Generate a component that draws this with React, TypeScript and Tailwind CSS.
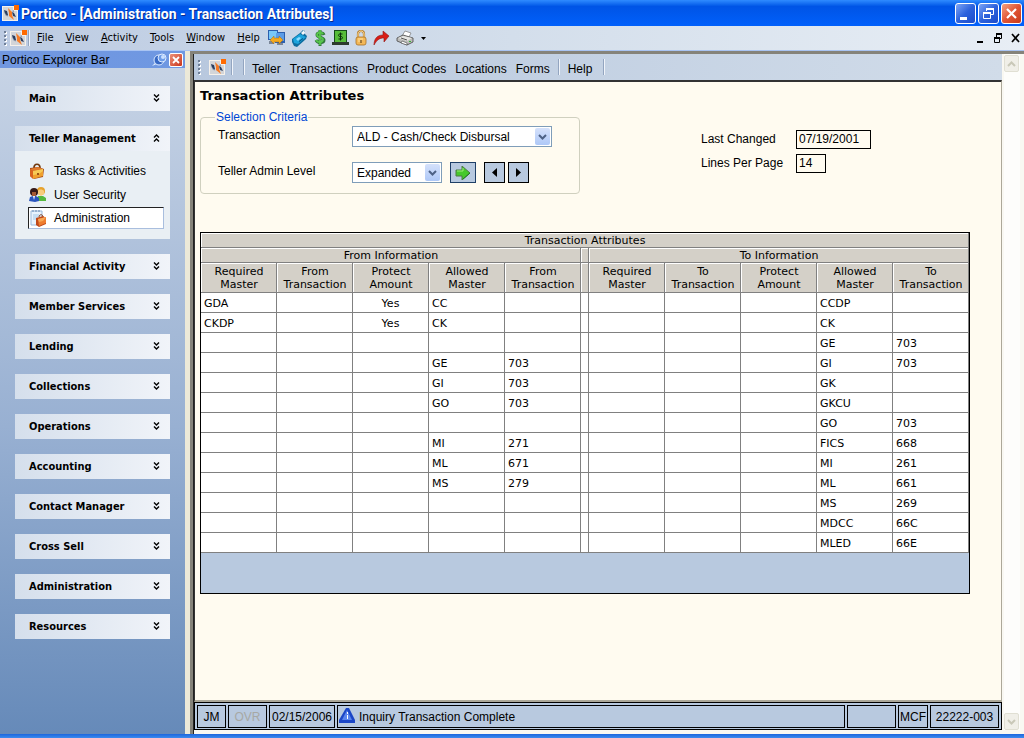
import type { ReactNode } from 'react';

const MENUS = ['File', 'View', 'Activity', 'Tools', 'Window', 'Help'];
const PAGE_LINKS = ['Teller', 'Transactions', 'Product Codes', 'Locations', 'Forms'];
const SECTIONS = [
  'Financial Activity',
  'Member Services',
  'Lending',
  'Collections',
  'Operations',
  'Accounting',
  'Contact Manager',
  'Cross Sell',
  'Administration',
  'Resources',
];

type Row = { from: string[]; to: string[] };

const ROWS: Row[] = [
  { from: ['GDA', '', 'Yes', 'CC', ''], to: ['', '', '', 'CCDP', ''] },
  { from: ['CKDP', '', 'Yes', 'CK', ''], to: ['', '', '', 'CK', ''] },
  { from: ['', '', '', '', ''], to: ['', '', '', 'GE', '703'] },
  { from: ['', '', '', 'GE', '703'], to: ['', '', '', 'GI', '703'] },
  { from: ['', '', '', 'GI', '703'], to: ['', '', '', 'GK', ''] },
  { from: ['', '', '', 'GO', '703'], to: ['', '', '', 'GKCU', ''] },
  { from: ['', '', '', '', ''], to: ['', '', '', 'GO', '703'] },
  { from: ['', '', '', 'MI', '271'], to: ['', '', '', 'FICS', '668'] },
  { from: ['', '', '', 'ML', '671'], to: ['', '', '', 'MI', '261'] },
  { from: ['', '', '', 'MS', '279'], to: ['', '', '', 'ML', '661'] },
  { from: ['', '', '', '', ''], to: ['', '', '', 'MS', '269'] },
  { from: ['', '', '', '', ''], to: ['', '', '', 'MDCC', '66C'] },
  { from: ['', '', '', '', ''], to: ['', '', '', 'MLED', '66E'] },
];

const columns = (side: string) => [
  ['Required', 'Master'],
  [side, 'Transaction'],
  ['Protect', 'Amount'],
  ['Allowed', 'Master'],
  [side, 'Transaction'],
];

function Logo() {
  return (
    <svg width="17" height="17" viewBox="0 0 17 17" className="shrink-0" aria-hidden>
      <path d="M0 1h12v4h4v11H0z" fill="#f6f1ea" />
      <path d="M1 2h10v4h4v9H1z" fill="#d3d5d8" />
      <path d="M2 5l3 1 1 4-1 1-2-2z" fill="#2a3d5e" />
      <path d="M10 7l2 1 2 4-3-1z" fill="#2a3d5e" />
      <path d="M3 8l3 4-3-2zM10 6l2-1v3z" fill="#8d9cb3" />
      <path d="M6 3l4 4v3l2 5-5-4V8z" fill="#f57a24" />
      <path d="M12 0h5v5h-5z" fill="#ff6a00" />
    </svg>
  );
}

function Grip() {
  return (
    <svg width="3" height="17" viewBox="0 0 3 17" className="shrink-0" aria-hidden>
      {[0, 4, 8, 12].map((y) => (
        <g key={y}>
          <path d={`M1 ${y + 2}h2v2H1z`} fill="#fff" />
          <path d={`M0 ${y + 1}h2v2H0z`} fill="#6f7f97" />
        </g>
      ))}
    </svg>
  );
}

function Separator() {
  return <span className="h-4 w-px shrink-0 bg-[#f0f4fa] shadow-[-1px_0_0_#93a5c0]" />;
}

function Chevrons({ up }: { up?: boolean }) {
  return (
    <svg width="7" height="8" viewBox="0 0 7 8" fill="none" stroke="#000" strokeWidth="1.4" className="mt-[6px] self-start" aria-hidden>
      <path d={up ? 'M1 3.5l2.500-2.500 2.500 2.500M1 7.500l2.500-2.500 2.500 2.500' : 'M1 .5l2.500 2.500 2.500-2.500M1 4.500l2.500 2.500 2.500-2.500'} />
    </svg>
  );
}

const ToolIcons: { label: string; icon: ReactNode }[] = [
  {
    label: 'Connections',
    icon: (
      <svg width="17" height="16" viewBox="0 0 17 16">
        <path d="M0 0h10v10H0zM7 2h10v11H7z" fill="#2c5fae" />
        <path d="M1 1h8v8H1z" fill="#79c8f8" />
        <path d="M8 3h8v8H8z" fill="#5a9ce8" />
        <path d="M1 11h5v3H1zM9 13h6v2H9z" fill="#7b8798" />
        <path d="M2 10l4-4v2h5V6l4 4-4 4v-2H6v2z" fill="#f3a91f" stroke="#98610c" strokeWidth=".4" />
      </svg>
    ),
  },
  {
    label: 'Terminal',
    icon: (
      <svg width="17" height="17" viewBox="0 0 17 17">
        <path d="M1 9l8-6 3-3 2 1-1 2 3 3-1 3-9 8-3-1-2-4z" fill="#0e6c9e" />
        <path d="M2 9l7-5 6 3-8 7-4-1z" fill="#1ba3dc" />
        <path d="M10 3l3-3 1 3-2 2z" fill="#f4f8fb" />
        <path d="M5 9l3-2 2 1-3 3z" fill="#8fdcff" />
        <path d="M8 11l4-3v1l-4 3z" fill="#064a78" />
      </svg>
    ),
  },
  {
    label: 'Cash',
    icon: (
      <svg width="12" height="16" viewBox="0 0 12 16" fill="none">
        <path d="M10 5c-1-3-7-3-7 0s7 2 7 5-6 4-8 0M6 0v16" stroke="#33793b" strokeWidth="3" />
        <path d="M9 4c-1-2-6-2-6 1s7 2 6 5-5 3-7 0M6 0v15" stroke="#58c84b" strokeWidth="1.700" />
      </svg>
    ),
  },
  {
    label: 'Cash drawer',
    icon: (
      <svg width="17" height="16" viewBox="0 0 17 16">
        <path d="M2 0h13v13H2z" fill="#174b1c" />
        <path d="M3 1h11v11H3z" fill="#57bd3a" />
        <path d="M0 12h17v3H0z" fill="#2d3b2d" />
        <path d="M10.500 4H8c-2 0-2 2.500 0 2.500h1c2 0 2 2.500 0 2.500H6.500M8.500 2.500v8" stroke="#092b0b" strokeWidth="1" fill="none" />
      </svg>
    ),
  },
  {
    label: 'Lock',
    icon: (
      <svg width="12" height="16" viewBox="0 0 12 16">
        <path d="M3 8V4c0-4 6-4 6 0v4" fill="none" stroke="#b27b2b" strokeWidth="2.200" />
        <path d="M3 8V4c0-4 6-4 6 0v4" fill="none" stroke="#ffe0a0" strokeWidth="1" />
        <rect x="1" y="7" width="10" height="8" rx="2" fill="#f3b858" stroke="#aa7223" strokeWidth=".8" />
        <path d="M3 9h5M3 11h4" stroke="#ffe2a1" />
        <path d="M6 10v3" stroke="#71501f" strokeWidth="1.300" />
      </svg>
    ),
  },
  {
    label: 'Forward',
    icon: (
      <svg width="17" height="16" viewBox="0 0 17 16">
        <path d="M1 15c0-6 3-10 9-10V1l6 5-5 6V8c-5 0-7 2-10 7z" fill="#d91d16" stroke="#8f1714" strokeWidth=".6" />
      </svg>
    ),
  },
  {
    label: 'Print',
    icon: (
      <svg width="19" height="16" viewBox="0 0 19 16">
        <path d="M6 6l3-5 6 2-3 6z" fill="#fff" stroke="#777" strokeWidth=".7" />
        <path d="M1 8l6-3 10 3v4l-6 3-10-4z" fill="#bcbcba" stroke="#555" strokeWidth=".9" />
        <path d="M2 8l5-2 9 2-5 3z" fill="#e7e7e4" />
        <path d="M5 8l6 2" stroke="#555" />
        <path d="M6 11l5 2v2l-6-2z" fill="#fff" stroke="#444" strokeWidth=".6" />
        <path d="M13 11h2v1h-2z" fill="#30b832" />
      </svg>
    ),
  },
];

function BriefcaseIcon() {
  return (
    <svg width="16" height="17" viewBox="0 0 16 17" aria-hidden>
      <path d="M5 5c0-5 6-5 6 0" fill="none" stroke="#70390f" strokeWidth="1.700" />
      <path d="M1 5l8-1 6 2-1 8-9 2-4-3z" fill="#a64a19" />
      <path d="M4 8l10-2v7l-10 3z" fill="#efa02d" />
      <path d="M1 6l3 2v8l-3-3z" fill="#d9631f" />
      <path d="M1 6l8-2 5 2-10 2z" fill="#e07b2c" />
      <path d="M4 8l10-2v2l-4 3-6 1z" fill="#f7ca55" />
      <path d="M8 10h2v2H8z" fill="#9c5413" />
    </svg>
  );
}

function PeopleIcon() {
  return (
    <svg width="17" height="16" viewBox="0 0 17 16" aria-hidden>
      <circle cx="12" cy="4" r="4" fill="#e7a32e" />
      <path d="M9 4c0-2 5-2 6 0v3l-3 2-3-2z" fill="#f8cc7e" />
      <path d="M7 14l2-5h5l3 2v3z" fill="#55b840" />
      <circle cx="5" cy="5" r="4" fill="#351a18" />
      <path d="M3 5h4v4H3z" fill="#a45932" />
      <path d="M0 14l1-4 3-1h3l3 2v3l-4 1z" fill="#2955bd" />
      <path d="M4 9h2l-1 4z" fill="#fff" />
    </svg>
  );
}

function ClipboardIcon() {
  return (
    <svg width="17" height="17" viewBox="0 0 17 17" aria-hidden>
      <path d="M1 1h11v14H1z" fill="#e8f3fd" stroke="#9bb9da" />
      <path d="M3 0v2M6 0v2M9 0v2" stroke="#6b8db5" />
      <path d="M3 5h6M3 7h5M3 9h3" stroke="#a3c8e8" />
      <path d="M9 7c0-3 4-3 4 0" fill="none" stroke="#7c3c1b" />
      <path d="M6 8l7-2 3 2v6l-7 3-3-2z" fill="#c04a1a" />
      <path d="M8 9l8-2v6l-7 3z" fill="#ee7d30" />
      <path d="M8 9l8-2-3 4-4 1z" fill="#f7a856" />
    </svg>
  );
}

function TitleBar() {
  const button =
    'flex size-[21px] items-center justify-center rounded-[3px] border border-white bg-linear-to-br';
  return (
    <header className="flex h-[26px] items-center bg-linear-to-b from-[#2f8bff] via-[#0054e6] via-25% to-[#0160fb] pr-[2px] pl-[2px]">
      <Logo />
      <h1 className="ml-[2px] flex-1 pt-px font-['Roboto',sans-serif] text-[14px] leading-5 font-bold text-white [text-shadow:1px_1px_0_#0a2a8c]">
        Portico - [Administration - Transaction Attributes]
      </h1>
      <div className="flex gap-[2px]">
        <button type="button" aria-label="Minimize" className={`${button} from-[#7ea4f5] via-[#2d62dc] to-[#1c4bcb]`}>
          <svg width="15" height="15" viewBox="0 0 15 15"><path d="M2 11h7v3H2z" fill="#fff" /></svg>
        </button>
        <button type="button" aria-label="Restore" className={`${button} from-[#7ea4f5] via-[#2d62dc] to-[#1c4bcb]`}>
          <svg width="15" height="15" viewBox="0 0 15 15" fill="none" stroke="#fff">
            <path d="M5.500 5V2.500h7v6H10M2.500 6.500h7v6h-7z" />
            <path d="M5 3h8M2 7h8" strokeWidth="2" />
          </svg>
        </button>
        <button type="button" aria-label="Close" className={`${button} from-[#f2a080] via-[#e05535] to-[#c83a18]`}>
          <svg width="15" height="15" viewBox="0 0 15 15"><path d="M3 3l9 9M12 3l-9 9" stroke="#fff" strokeWidth="2.200" /></svg>
        </button>
      </div>
    </header>
  );
}

function MenuBar() {
  return (
    <nav className="flex h-[25px] items-center border-b border-[#a9c4f2] bg-linear-to-r from-[#bccbe2] via-[#d3deeb] to-[#e8eef5] pl-1 font-['DejaVu_Sans_Condensed','DejaVu_Sans',sans-serif] text-[11px]">
      <Grip />
      <span className="ml-[3px] flex">
        <Logo />
      </span>
      <span className="ml-[2px] flex">
        <Separator />
      </span>
      <ul className="ml-[7px] flex gap-[12px]">
        {MENUS.map((m) => (
          <li key={m}>
            <button type="button">
              <span className="underline">{m[0]}</span>
              {m.slice(1)}
            </button>
          </li>
        ))}
      </ul>
      <div className="ml-2 flex items-center gap-[6px]">
        {ToolIcons.map((t) => (
          <button key={t.label} type="button" aria-label={t.label}>
            {t.icon}
          </button>
        ))}
        <svg width="5" height="3" viewBox="0 0 5 3" aria-hidden><path d="M0 0h5L2.500 3z" /></svg>
      </div>
      <div className="mr-[3px] ml-auto flex gap-2">
        <button type="button" aria-label="Minimize child window">
          <svg width="10" height="10" viewBox="0 0 10 10"><path d="M2 8h6v2H2z" /></svg>
        </button>
        <button type="button" aria-label="Restore child window">
          <svg width="10" height="10" viewBox="0 0 10 10" fill="none" stroke="#000">
            <path d="M3.500 4V1.500h5v4H7M1.500 5.500h5v4h-5z" />
            <path d="M3 1h6M1 5h6" strokeWidth="2" />
          </svg>
        </button>
        <button type="button" aria-label="Close child window">
          <svg width="10" height="10" viewBox="0 0 10 10"><path d="M1 1l7 8M8 1L1 9" stroke="#000" strokeWidth="1.700" /></svg>
        </button>
      </div>
    </nav>
  );
}

function SectionHeader({ title, open }: { title: string; open?: boolean }) {
  return (
    <button
      type="button"
      aria-expanded={!!open}
      className="flex h-[25px] w-full items-center justify-between bg-linear-to-r from-[#d5dfec] to-[#f1f4f9] pt-[2px] pr-[10px] pl-[14px] text-left font-['DejaVu_Sans_Condensed','DejaVu_Sans',sans-serif] text-[11px] font-bold"
    >
      {title}
      <Chevrons up={open} />
    </button>
  );
}

function Sidebar() {
  return (
    <aside className="w-[185px] shrink-0 bg-linear-to-b from-[#c9d5e6] via-[#98b0d2] via-55% to-[#668ab9]">
      <div className="flex h-[17px] items-center bg-linear-to-r from-[#7197e0] to-[#6f98e2] pr-[2px] pl-[2px]">
        <h2 className="flex-1 text-[12px] leading-4">Portico Explorer Bar</h2>
        <button type="button" aria-label="Pin" className="mr-[2px]">
          <svg width="15" height="14" viewBox="0 0 15 14">
            <path d="M0 13l5-5 2 2z" fill="#e9f3ff" />
            <circle cx="7" cy="7" r="5" fill="#3769c5" stroke="#dceaff" />
            <circle cx="10" cy="5" r="4" fill="#6d9ce8" stroke="#dceaff" />
            <circle cx="11" cy="4" r="2" fill="#c9dfff" />
          </svg>
        </button>
        <button
          type="button"
          aria-label="Close explorer bar"
          className="flex size-[14px] items-center justify-center rounded-[2px] border border-white bg-linear-to-br from-[#ec8f77] to-[#c93217]"
        >
          <svg width="8" height="8" viewBox="0 0 8 8"><path d="M1 1l6 6M7 1L1 7" stroke="#fff" strokeWidth="1.800" /></svg>
        </button>
      </div>
      <div className="flex flex-col gap-[15px] px-[15px] pt-[18px]">
        <SectionHeader title="Main" />
        <div className="bg-[#e9eff4]">
          <SectionHeader title="Teller Management" open />
          <ul className="px-[6px] pt-2 pb-[10px] pl-[13px] text-[12px]">
            <li>
              <a href="#tasks" className="flex h-6 items-center gap-[9px] pl-px">
                <BriefcaseIcon /> Tasks &amp; Activities
              </a>
            </li>
            <li>
              <a href="#security" className="flex h-6 items-center gap-2 pl-px">
                <PeopleIcon /> User Security
              </a>
            </li>
            <li>
              <a
                href="#administration"
                className="flex h-[22px] items-center gap-[7px] border border-t-[#222] border-r-[#a9bede] border-b-[#a9bede] border-l-[#222] bg-white pl-px"
              >
                <ClipboardIcon /> Administration
              </a>
            </li>
          </ul>
        </div>
        {SECTIONS.map((s) => (
          <SectionHeader key={s} title={s} />
        ))}
      </div>
    </aside>
  );
}

function Dropdown({ id, options, className }: { id: string; options: string[]; className: string }) {
  return (
    <div className={`relative h-[21px] ${className}`}>
      <select
        id={id}
        className="block h-full w-full appearance-none border border-[#7f9db9] bg-white pt-px pr-5 pl-1 text-[12px] leading-[18px]"
      >
        {options.map((o) => (
          <option key={o}>{o}</option>
        ))}
      </select>
      <span className="pointer-events-none absolute top-[2px] right-[2px] flex h-[17px] w-[15px] items-center justify-center rounded-[2px] bg-linear-to-b from-[#d5e1fb] to-[#aec8f7]">
        <svg width="9" height="6" viewBox="0 0 9 6" fill="none" aria-hidden>
          <path d="M1 1l3.500 3.500L8 1" stroke="#4d6185" strokeWidth="2" />
        </svg>
      </span>
    </div>
  );
}

function Criteria() {
  const square = 'flex h-[21px] w-[21px] items-center justify-center border border-black bg-[#b8c9df]';
  return (
    <div className="flex flex-wrap items-start gap-x-[121px]">
      <fieldset className="h-[84px] w-[380px] rounded-[4px] border border-[#d0d0bf] pl-[17px]">
        <legend className="-ml-[3px] px-[1px] text-[12px] leading-[14px] text-[#0046d5]">Selection Criteria</legend>
        <div className="-mt-px flex items-start">
          <label htmlFor="transaction" className="w-[134px] pt-[2px] text-[12px] leading-5">
            Transaction
          </label>
          <Dropdown id="transaction" options={['ALD - Cash/Check Disbursal']} className="mt-[3px] w-[200px]" />
        </div>
        <div className="mt-[12px] flex items-start">
          <label htmlFor="level" className="w-[134px] pt-[2px] text-[12px] leading-5">
            Teller Admin Level
          </label>
          <div className="mt-[3px] flex">
            <Dropdown id="level" options={['Expanded', 'Basic']} className="w-[90px]" />
            <button
              type="button"
              aria-label="Go"
              className="ml-2 flex h-[21px] w-[26px] items-center justify-center border border-[#1f3f66] bg-[#b8c9df]"
            >
              <svg width="16" height="14" viewBox="0 0 16 14">
                <path d="M1 4h6V0l8 7-8 7v-4H1z" fill="#46c82b" stroke="#4d7a42" />
                <path d="M2 5h6V2" stroke="#9af074" fill="none" />
                <path d="M8 13l7-6" stroke="#1d7f1c" />
              </svg>
            </button>
            <button type="button" aria-label="Previous" className={`${square} ml-2`}>
              <svg width="5" height="9" viewBox="0 0 5 9"><path d="M5 0v9L0 4.500z" /></svg>
            </button>
            <button type="button" aria-label="Next" className={`${square} ml-[3px]`}>
              <svg width="5" height="9" viewBox="0 0 5 9"><path d="M0 0v9l5-4.500z" /></svg>
            </button>
          </div>
        </div>
      </fieldset>
      <div className="grid grid-cols-[95px_auto] gap-y-[5px] pt-[20px] text-[12px] leading-[19px]">
        <label htmlFor="changed">Last Changed</label>
        <input id="changed" defaultValue="07/19/2001" readOnly className="h-[19px] w-[75px] border border-black px-[2px]" />
        <label htmlFor="lines">Lines Per Page</label>
        <input id="lines" defaultValue="14" className="h-[19px] w-[30px] border border-black px-[2px]" />
      </div>
    </div>
  );
}

function AttributesTable() {
  const head =
    'border-r border-b border-[#808080] bg-[#d4d0c8] p-0 pt-px pl-px text-center font-normal shadow-[inset_1px_1px_0_#fff]';
  const cell = 'h-5 border-r border-b border-[#808080] bg-white p-0 px-[3px] pt-[2px]';
  const cells = (values: string[], key: string) =>
    values.map((v, i) => (
      <td key={key + i} className={i === 2 ? `${cell} text-center` : cell}>
        {v}
      </td>
    ));
  return (
    <div className="w-[770px] border border-black bg-[#b8c9df] pb-10 font-['DejaVu_Sans',sans-serif] text-[11px] leading-[13px]">
      <table className="w-full table-fixed border-separate border-spacing-0">
        <colgroup>
          <col span={5} className="w-[76px]" />
          <col className="w-2" />
          <col span={5} className="w-[76px]" />
        </colgroup>
        <thead>
          <tr className="h-[15px]">
            <th colSpan={11} className={head}>Transaction Attributes</th>
          </tr>
          <tr className="h-[15px]">
            <th colSpan={5} className={head}>From Information</th>
            <th className={head} />
            <th colSpan={5} className={head}>To Information</th>
          </tr>
          <tr className="h-[30px]">
            {columns('From').map(([a, b], i) => (
              <th key={i} className={head}>{a}<br />{b}</th>
            ))}
            <th className={head} />
            {columns('To').map(([a, b], i) => (
              <th key={i} className={head}>{a}<br />{b}</th>
            ))}
          </tr>
        </thead>
        <tbody>
          {ROWS.map((r, n) => (
            <tr key={n}>
              {cells(r.from, 'f')}
              <td className="border-r border-b border-[#808080] bg-white p-0" />
              {cells(r.to, 't')}
            </tr>
          ))}
        </tbody>
      </table>
    </div>
  );
}

function StatusBar() {
  const box = 'flex h-[23px] items-center justify-center border border-black pt-px';
  return (
    <footer className="flex h-7 items-center gap-[2px] border border-black bg-[#b8c9df] px-[2px] text-[12px]">
      <span className={`${box} w-[29px]`}>JM</span>
      <span className={`${box} w-[39px] text-[#a7a8a4]`}>OVR</span>
      <span className={`${box} w-[66px]`}>02/15/2006</span>
      <span className="flex h-[23px] flex-1 items-center gap-[3px] border border-black pl-px">
        <svg width="17" height="16" viewBox="0 0 17 16" aria-hidden>
          <path d="M7 0h3l6 12v3H0v-3z" fill="#1b46c6" />
          <path d="M8 2l5 10H3z" fill="#5b86ee" />
          <path d="M8 4h1v2H8zM8 7h1v4H8z" fill="#fff" />
        </svg>
        <span className="pt-[2px]">Inquiry Transaction Complete</span>
      </span>
      <span className={`${box} w-[49px]`} />
      <span className={`${box} w-[30px]`}>MCF</span>
      <span className={`${box} w-[69px]`}>22222-003</span>
    </footer>
  );
}

function ScrollButton({ down }: { down?: boolean }) {
  return (
    <button
      type="button"
      aria-label={down ? 'Scroll down' : 'Scroll up'}
      className="flex h-[17px] w-[15px] items-center justify-center rounded-[2px] border border-[#e0dfd3] bg-[#f0efe8]"
    >
      <svg width="9" height="6" viewBox="0 0 9 6" fill="none" aria-hidden>
        <path d={down ? 'M1 1l3.500 3.500L8 1' : 'M1 5l3.500-3.500L8 5'} stroke="#c9c8b8" strokeWidth="2" />
      </svg>
    </button>
  );
}

export default function App() {
  return (
    <div className="flex min-h-screen flex-col bg-[#ece9d8] font-['Liberation_Sans',Arial,sans-serif] text-black">
      <TitleBar />
      <MenuBar />
      <div className="flex flex-1">
        <Sidebar />
        <div className="ml-[5px] flex flex-1 border-t-[3px] border-l-[3px] border-[#85837a] bg-[#f9f8f2] pr-[4px] pb-1 shadow-[inset_1px_0_0_#222]">
          <main className="flex flex-1 flex-col pl-px">
            <nav className="flex h-[26px] items-center bg-linear-to-r from-[#b8c8de] to-[#d1dce9] pl-1 text-[12px]">
              <Grip />
              <span className="ml-2 flex">
                <Logo />
              </span>
              <div className="ml-[6px] flex gap-[11px]">
                <Separator />
                <Separator />
              </div>
              <ul className="ml-[7px] flex gap-[9px] pt-[3px]">
                {PAGE_LINKS.map((l) => (
                  <li key={l}>
                    <a href="#">{l}</a>
                  </li>
                ))}
              </ul>
              <div className="ml-[9px] flex items-center gap-2">
                <Separator />
                <a href="#" className="pt-[3px]">Help</a>
                <span className="ml-1 flex">
                  <Separator />
                </span>
              </div>
            </nav>
            <div className="flex-1 border-t-2 border-r border-b-2 border-l border-t-[#333] border-r-[#aca899] border-b-[#aca899] border-l-[#333] bg-[#fffbf0] px-[5px] pt-[5px]">
              <h2 className="mb-[2px] font-['DejaVu_Sans',sans-serif] text-[13px] leading-[18px] font-bold">
                Transaction Attributes
              </h2>
              <div className="pt-[3px]">
                <Criteria />
              </div>
              <div className="mt-[38px]">
                <AttributesTable />
              </div>
            </div>
            <StatusBar />
          </main>
          <div className="ml-[2px] flex w-4 flex-col justify-between bg-[#fdfdfb] pt-px">
            <ScrollButton />
            <ScrollButton down />
          </div>
        </div>
      </div>
      <div className="h-1 bg-linear-to-b from-[#1c66dd] to-[#3c8bee]" />
    </div>
  );
}
